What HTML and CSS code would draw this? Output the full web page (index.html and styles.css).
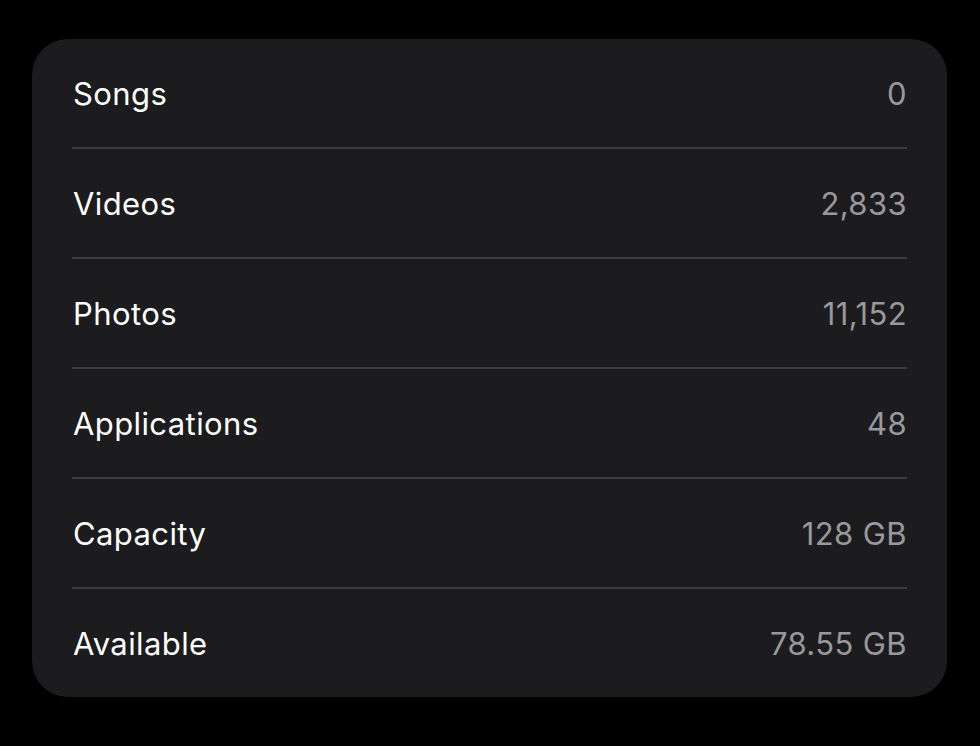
FILE: index.html
```html
<!DOCTYPE html>
<html>
<head>
<meta charset="utf-8">
<link rel="stylesheet" href="styles.css">
</head>
<body>
<div class="card">
  <div class="row"><span class="label">Songs</span><span class="value">0</span></div>
  <div class="row"><span class="label">Videos</span><span class="value">2,833</span></div>
  <div class="row"><span class="label">Photos</span><span class="value">11,152</span></div>
  <div class="row"><span class="label">Applications</span><span class="value">48</span></div>
  <div class="row"><span class="label">Capacity</span><span class="value">128 GB</span></div>
  <div class="row"><span class="label">Available</span><span class="value">78.55 GB</span></div>
</div>
</body>
</html>
```
FILE: styles.css
```css
html, body {
  margin: 0;
  padding: 0;
  background: #000;
}
body {
  padding: 39px 33px 0 32px;
  font-family: Inter, "Noto Sans", sans-serif;
}
.card {
  background: #1c1c1e;
  border-radius: 36px;
  padding: 0 40px 0 40px;
  width: 915px;
  box-sizing: border-box;
}
.row {
  box-sizing: border-box;
  height: 108px;
  display: flex;
  align-items: center;
  justify-content: space-between;
  font-size: 31px;
  letter-spacing: 0.4px;
}
.row + .row {
  height: 110px;
  border-top: 2px solid #3c3c40;
}
.label {
  color: #fff;
  padding-left: 1px;
}
.value {
  color: #98989d;
}
```
